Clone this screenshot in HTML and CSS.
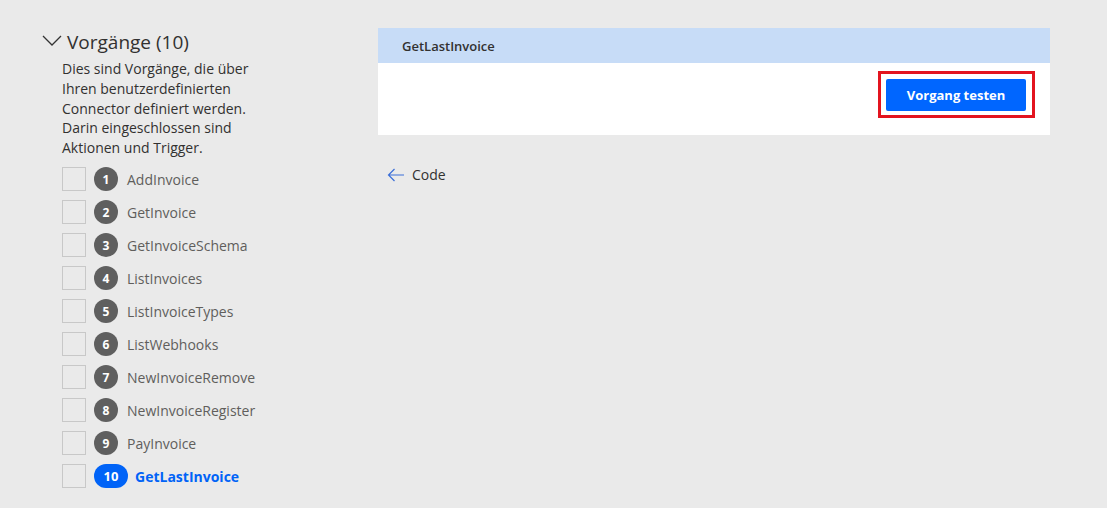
FILE: index.html
```html
<!DOCTYPE html>
<html lang="de">
<head>
<meta charset="utf-8">
<link rel="stylesheet" href="styles.css">
</head>
<body>
<div class="page">
  <aside class="side">
    <div class="sec-title">
      <svg class="chev" width="20" height="12" viewBox="0 0 20 12"><path d="M1 1 L10 10 L19 1" fill="none" stroke="#333" stroke-width="1.3"/></svg>
      <span>Vorgänge (10)</span>
    </div>
    <p class="desc">Dies sind Vorgänge, die über Ihren benutzerdefinierten Connector definiert werden. Darin eingeschlossen sind Aktionen und Trigger.</p>
    <ul class="ops">
      <li class="op"><span class="cb"></span><span class="num">1</span><span class="name">AddInvoice</span></li>
      <li class="op"><span class="cb"></span><span class="num">2</span><span class="name">GetInvoice</span></li>
      <li class="op"><span class="cb"></span><span class="num">3</span><span class="name">GetInvoiceSchema</span></li>
      <li class="op"><span class="cb"></span><span class="num">4</span><span class="name">ListInvoices</span></li>
      <li class="op"><span class="cb"></span><span class="num">5</span><span class="name">ListInvoiceTypes</span></li>
      <li class="op"><span class="cb"></span><span class="num">6</span><span class="name">ListWebhooks</span></li>
      <li class="op"><span class="cb"></span><span class="num">7</span><span class="name">NewInvoiceRemove</span></li>
      <li class="op"><span class="cb"></span><span class="num">8</span><span class="name">NewInvoiceRegister</span></li>
      <li class="op"><span class="cb"></span><span class="num">9</span><span class="name">PayInvoice</span></li>
      <li class="op active"><span class="cb"></span><span class="num">10</span><span class="name">GetLastInvoice</span></li>
    </ul>
  </aside>
  <main class="main">
    <section class="card">
      <div class="card-head">GetLastInvoice</div>
      <div class="card-body">
        <div class="highlight"><button class="btn">Vorgang testen</button></div>
      </div>
    </section>
    <div class="back">
      <svg width="18" height="14" viewBox="0 0 18 14"><path d="M17 7 H1.5 M7.5 1 L1.5 7 L7.5 13" fill="none" stroke="#3b6fd8" stroke-width="1.2"/></svg>
      <span>Code</span>
    </div>
  </main>
</div>
</body>
</html>
```
FILE: styles.css
```css
html, body { margin: 0; padding: 0; }
body {
  background: #eaeaea;
  font-family: "Open Sans", "Noto Sans", "Liberation Sans", sans-serif;
  color: #323130;
  width: 1107px;
  height: 508px;
  overflow: hidden;
}
.page {
  display: flex;
  padding: 28px 0 0 42px;
}
.side {
  width: 260px;
  flex: none;
}
.sec-title {
  display: flex;
  align-items: center;
  height: 26px;
  margin-top: 1px;
  font-size: 19px;
  color: #323130;
}
.chev { margin-right: 5px; margin-top: -2px; }
.desc {
  margin: 4px 0 0 20px;
  width: 205px;
  font-size: 14px;
  line-height: 19.8px;
  color: #323130;
}
.ops {
  list-style: none;
  margin: 5px 0 0 20px;
  padding: 0;
}
.op {
  display: flex;
  align-items: center;
  height: 33px;
}
.cb {
  width: 22px;
  height: 22px;
  border: 1px solid #c8c8c8;
  box-sizing: content-box;
  flex: none;
}
.num {
  margin-left: 8px;
  width: 24px;
  height: 24px;
  border-radius: 12px;
  background: #5f5f5f;
  color: #fff;
  font-size: 12px;
  font-weight: 700;
  display: flex;
  align-items: center;
  justify-content: center;
  flex: none;
}
.name {
  margin-left: 9px;
  font-size: 14px;
  color: #605e5c;
}
.op.active .num {
  width: 34px;
  background: #0063f7;
  font-size: 13px;
}
.op.active .name {
  margin-left: 7px;
  color: #0063f7;
  font-weight: 700;
}
.main {
  margin-left: 76px;
  width: 672px;
}
.card {
  background: #fff;
}
.card-head {
  background: #c7dcf7;
  height: 35px;
  box-sizing: border-box;
  padding: 9px 0 0 24px;
  font-size: 13px;
  font-weight: 600;
  color: #323130;
}
.card-body {
  height: 72px;
  display: flex;
  justify-content: flex-end;
  align-items: flex-start;
  padding: 8px 15px 0 0;
  box-sizing: border-box;
}
.highlight {
  border: 3px solid #e3141f;
  padding: 5px 6px 4px 5px;
}
.btn {
  display: block;
  width: 140px;
  height: 32px;
  border: none;
  border-radius: 2px;
  background: #0066ff;
  color: #fff;
  font-family: inherit;
  font-size: 13px;
  font-weight: 700;
  padding: 0;
}
.back {
  display: flex;
  align-items: center;
  margin: 30px 0 0 9px;
  font-size: 14px;
  color: #323130;
}
.back svg { margin-right: 7px; }
```
